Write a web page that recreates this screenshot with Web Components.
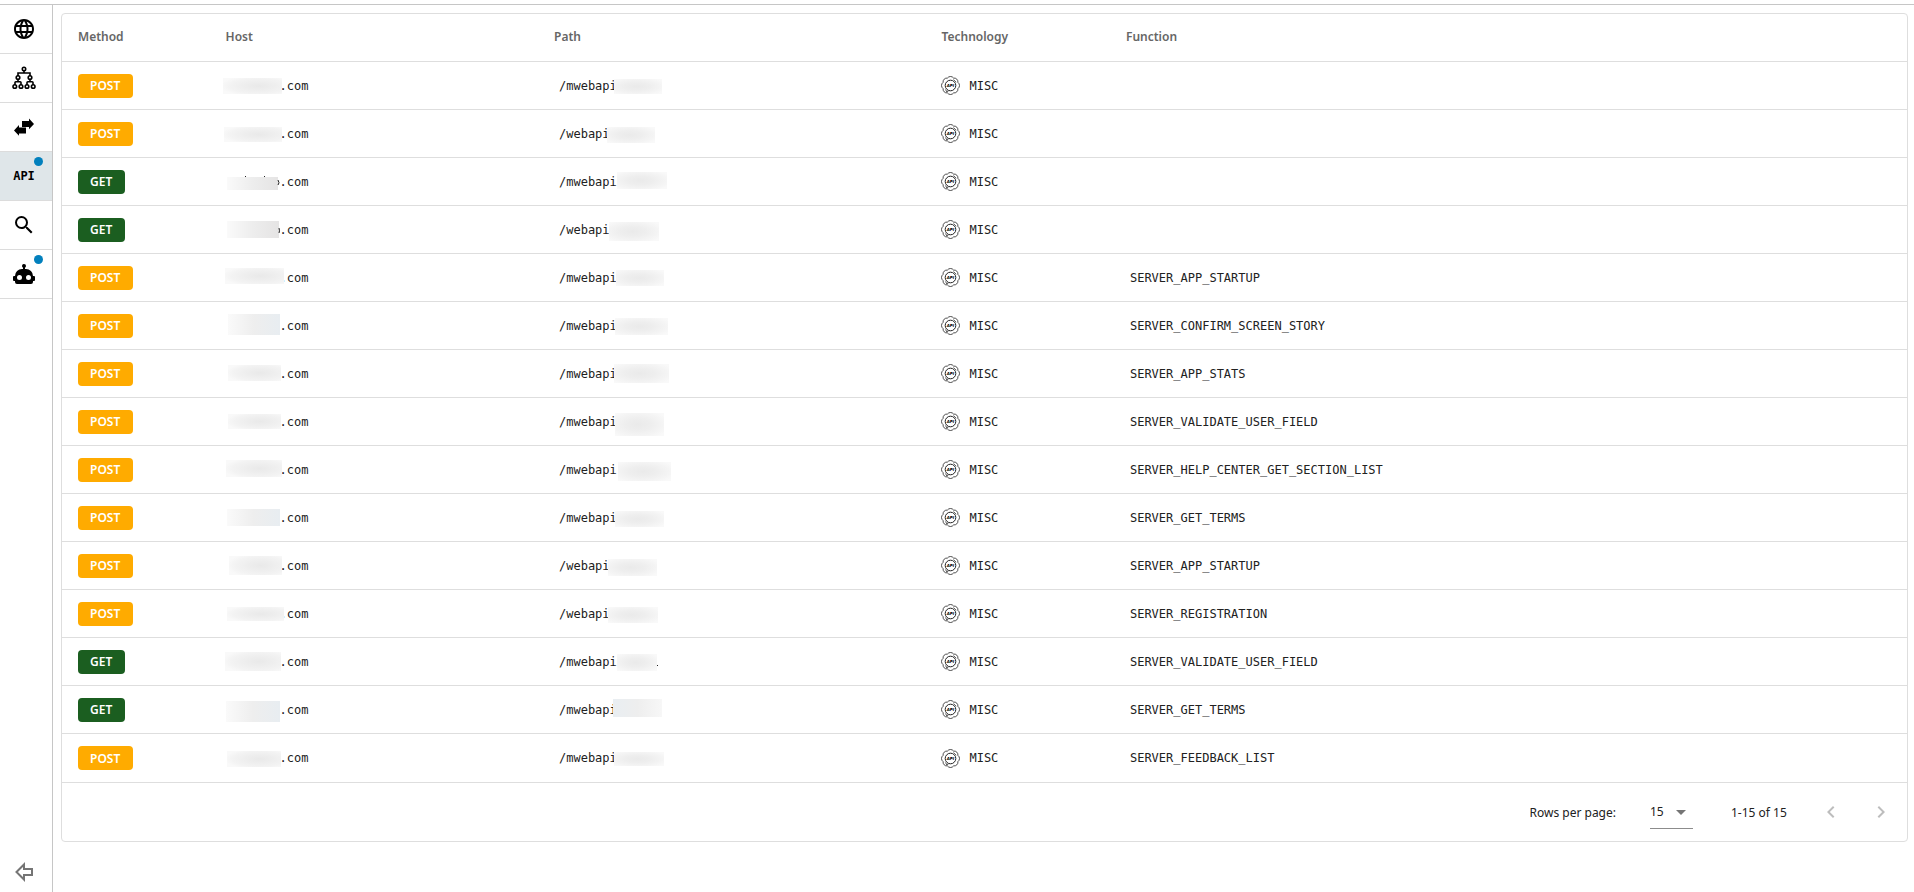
<!DOCTYPE html>
<html lang="en">
<head>
<meta charset="utf-8">
<title>API endpoints</title>
<style>
  html, body { margin: 0; height: 100%; background: #fff; }
  body { font-family: "Noto Sans", sans-serif; font-size: 12px; color: #212121; }
</style>
</head>
<body>
<app-shell>
  <side-nav slot="nav"></side-nav>
  <data-card>
    <endpoint-table></endpoint-table>
    <table-pager slot="footer"></table-pager>
  </data-card>
</app-shell>

<script>
const define = (name, html, setup) => {
  const template = document.createElement('template');
  template.innerHTML = html;
  customElements.define(name, class extends HTMLElement {
    constructor() {
      super();
      this.attachShadow({ mode: 'open' }).append(template.content.cloneNode(true));
    }
    connectedCallback() { if (setup) setup.call(this, this.shadowRoot); }
  });
};

/* Page frame: navigation rail on the left, content on the right */
define('app-shell', `
  <style>
    :host { display: flex; box-sizing: border-box; min-height: 100%; padding-top: 4px; }
    .frame { display: flex; flex: 1; border-top: 1px solid #c6c6c6; }
    main { flex: 1; min-width: 0; padding: 8px 6px 8px 8px; }
  </style>
  <div class="frame"><slot name="nav"></slot><main><slot></slot></main></div>
`);

define('nav-item', `
  <style>
    :host { display: block; border-bottom: 1px solid #dcdcdc; }
    :host([active]) { background: #dfe6e9; }
    :host([plain]) { border: 0; }
    button { position: relative; display: flex; align-items: center; width: 100%; height: 48px;
      padding: 0 12px; border: 0; background: none; color: #000; cursor: pointer; font: inherit; }
    :host([plain]) button { height: 40px; color: #757575; }
    .dot { display: none; position: absolute; top: 5px; right: 9px; width: 9px; height: 9px;
      border-radius: 50%; background: #0280bd; }
    :host([badge]) .dot { display: block; }
  </style>
  <button type="button"><slot></slot><span class="dot"></span></button>
`, function (root) {
  root.querySelector('button').setAttribute('aria-label', this.getAttribute('label'));
});

define('side-nav', `
  <style>
    :host { display: flex; flex-direction: column; justify-content: space-between; width: 52px;
      border-right: 1px solid #c6c6c6; }
    svg { display: block; width: 24px; height: 24px; fill: currentColor; }
    .line { fill: none; stroke: currentColor; stroke-width: 2; }
    .api { width: 24px; text-align: center; font: bold 12px/24px "DejaVu Sans Mono", monospace; }
  </style>
  <nav>
    <nav-item label="Web"><svg viewBox="0 0 24 24"><path d="M11.99 2C6.47 2 2 6.48 2 12s4.47 10 9.99 10C17.52 22 22 17.52 22 12S17.52 2 11.99 2zm6.93 6h-2.95a15.65 15.65 0 0 0-1.38-3.56A8.03 8.03 0 0 1 18.92 8zM12 4.04c.83 1.2 1.48 2.53 1.91 3.96h-3.82c.43-1.43 1.08-2.76 1.91-3.96zM4.26 14C4.1 13.36 4 12.69 4 12s.1-1.36.26-2h3.38c-.08.66-.14 1.32-.14 2s.06 1.34.14 2H4.26zm.82 2h2.95c.32 1.25.78 2.45 1.38 3.56A7.99 7.99 0 0 1 5.08 16zm2.95-8H5.08a7.99 7.99 0 0 1 4.33-3.56A15.65 15.65 0 0 0 8.03 8zM12 19.96c-.83-1.2-1.48-2.53-1.91-3.96h3.82c-.43 1.43-1.08 2.76-1.91 3.96zM14.34 14H9.66c-.09-.66-.16-1.32-.16-2s.07-1.35.16-2h4.68c.09.65.16 1.32.16 2s-.07 1.34-.16 2zm.25 5.56c.6-1.11 1.06-2.31 1.38-3.56h2.95a8.03 8.03 0 0 1-4.33 3.56zM16.36 14c.08-.66.14-1.32.14-2s-.06-1.34-.14-2h3.38c.16.64.26 1.31.26 2s-.1 1.36-.26 2h-3.38z"/></svg></nav-item>
    <nav-item label="Site map"><svg viewBox="0 0 24 24"><g class="line" style="stroke-width:1.6"><circle cx="12" cy="3" r="1.7"/><circle cx="6" cy="11.5" r="1.8"/><circle cx="18" cy="11.5" r="1.8"/><circle cx="2.8" cy="20.5" r="1.8"/><circle cx="9" cy="20.5" r="1.8"/><circle cx="15" cy="20.5" r="1.8"/><circle cx="21.2" cy="20.5" r="1.8"/><path d="M12 5v2M6 10V7h12v3M6 13.300v2.200M3 18.700v-2.200q0-.8.8-.8h4.400q.8 0 .8.8v2.200M18 13.300v2.200M15 18.700v-2.200q0-.8.8-.8h4.400q.8 0 .8.8v2.200"/></g></svg></nav-item>
    <nav-item label="Requests"><svg viewBox="0 0 24 24"><path d="M10 6h7V3.500L22 9l-5 5.200V12h-7zM14 12.500H7V10L2 15.500l5 5.200V18.500h7z"/></svg></nav-item>
    <nav-item label="API" active badge><span class="api">API</span></nav-item>
    <nav-item label="Search"><svg viewBox="0 0 24 24"><path d="M15.500 14h-.79l-.28-.27A6.471 6.471 0 0 0 16 9.500 6.500 6.500 0 1 0 9.500 16c1.610 0 3.090-.59 4.230-1.570l.27.28v.79l5 4.990L20.490 19l-4.990-5zm-6 0C7.010 14 5 11.990 5 9.500S7.010 5 9.500 5 14 7.010 14 9.500 11.990 14 9.500 14z"/></svg></nav-item>
    <nav-item label="Bots" badge><svg viewBox="0 0 24 24"><path d="M12 2a2 2 0 0 1 2 2c0 .74-.4 1.390-1 1.730V7h1a7 7 0 0 1 7 7h1a1 1 0 0 1 1 1v3a1 1 0 0 1-1 1h-1v1a2 2 0 0 1-2 2H5a2 2 0 0 1-2-2v-1H2a1 1 0 0 1-1-1v-3a1 1 0 0 1 1-1h1a7 7 0 0 1 7-7h1V5.730A2 2 0 0 1 12 2M7.500 13a2.500 2.500 0 1 0 0 5 2.500 2.500 0 0 0 0-5m9 0a2.500 2.500 0 1 0 0 5 2.500 2.500 0 0 0 0-5z"/></svg></nav-item>
  </nav>
  <nav-item label="Collapse" plain><svg viewBox="0 0 24 24"><path class="line" d="M4.500 12L12 4.500V9h8v6h-8v4.500z"/></svg></nav-item>
`);

define('data-card', `
  <style>
    :host { display: block; border: 1px solid #dedede; border-radius: 4px; overflow: hidden; }
  </style>
  <slot></slot><slot name="footer"></slot>
`);

define('method-badge', `
  <style>
    :host { display: inline-flex; align-items: center; height: 24px; padding: 0 13px 0 12px; border-radius: 4px;
      background: #ffab00; color: #fff; font-weight: 600; font-size: 12px; }
    :host([method="GET"]) { background: #1b5e20; }
  </style>
  <slot></slot>
`);

define('tech-label', `
  <style>
    :host { display: flex; align-items: center; gap: 9px; }
    svg { display: block; width: 19px; height: 19px; }
    path, circle { fill: none; stroke: #222; }
  </style>
  <svg viewBox="0 0 19 19" aria-hidden="true">
    <path stroke-width=".8" d="M16.900 12.600A3.800 3.800 0 0 1 12.600 16.900A3.800 3.800 0 0 1 6.400 16.900A3.800 3.800 0 0 1 2.100 12.600A3.800 3.800 0 0 1 2.100 6.400A3.800 3.800 0 0 1 6.400 2.100A3.800 3.800 0 0 1 12.600 2.100A3.800 3.800 0 0 1 16.900 6.400A3.800 3.800 0 0 1 16.900 12.600z"/>
    <circle cx="9.500" cy="9.500" r="5.300" stroke-width="1"/>
    <path stroke-width=".7" d="M12.500 3.500l2.700 2.700M4 13.500l2.500 2.300M5 15.800l2.500-.8"/>
    <text x="9.500" y="11" text-anchor="middle" font-family="DejaVu Sans" font-size="4" font-weight="700" font-style="italic">API</text>
  </svg>
  <slot></slot>
`);

/* Text with a masked section: the mask is laid in the same grid cell as the text */
define('masked-text', `
  <style>
    :host { display: grid; align-items: center; height: 47px; }
    span, svg { grid-area: 1 / 1; }
    span { padding-left: 5px; }
    :host([kind="host"]) span { padding-left: 54px; }
    svg { width: 130px; height: 47px; overflow: visible; }
  </style>
  <span><slot></slot></span>
  <svg viewBox="0 0 130 47" aria-hidden="true">
    <defs>
      <radialGradient id="host" cx=".6" cy=".5" r=".65"><stop offset="0" stop-color="#e9e9e9"/><stop offset=".4" stop-color="#eee"/><stop offset=".75" stop-color="#f3f3f3"/><stop offset="1" stop-color="#f9f9f9"/></radialGradient>
      <radialGradient id="path" cx=".47" cy=".5" r=".65"><stop offset="0" stop-color="#eaeaea"/><stop offset=".4" stop-color="#eee"/><stop offset=".75" stop-color="#f4f4f4"/><stop offset="1" stop-color="#f9f9f9"/></radialGradient>
      <linearGradient id="dark"><stop offset="0" stop-color="#fafafa"/><stop offset=".5" stop-color="#ededed"/><stop offset="1" stop-color="#e5e4e4"/></linearGradient>
      <linearGradient id="blue"><stop offset="0" stop-color="#fafafa"/><stop offset=".5" stop-color="#eee"/><stop offset="1" stop-color="#e8edf1"/></linearGradient>
      <linearGradient id="blueleft"><stop offset="0" stop-color="#e9eef2"/><stop offset=".5" stop-color="#eee"/><stop offset="1" stop-color="#f7f7f7"/></linearGradient>
    </defs>
    <rect/><path fill="none" stroke="#222"/>
  </svg>
`, function (root) {
  const [x, y, w, h, tone] = this.getAttribute('mask').split(' ');
  const rect = root.querySelector('rect');
  Object.entries({ x, y, width: w, height: h, fill: `url(#${tone || this.getAttribute('kind')})` })
    .forEach(([k, v]) => rect.setAttribute(k, v));
  root.querySelector('path').setAttribute('d', this.getAttribute('trace') || '');
});

/* method, host mask, path, path mask, function, host trace, path trace */
const ROWS = [
  ['POST', '-3 16 59 16', '/mwebapi', '60 17 48 15', ''],
  ['POST', '-2 17 58 15', '/webapi', '53 17 48 16', ''],
  ['GET', '1 19 51 13 dark', '/mwebapi', '63 14 50 17', '', 'M19.500 18v1M38.500 18v1M52 22q2 3 0 5'],
  ['GET', '1 15 52 17 dark', '/webapi', '55 16 50 19', '', 'M53 22q1 3 0 5'],
  ['POST', '-1 14 59 16', '/mwebapi', '62 16 48 16', 'SERVER_APP_STARTUP'],
  ['POST', '2 12 52 21 blue', '/mwebapi', '61 16 53 17', 'SERVER_CONFIRM_SCREEN_STORY'],
  ['POST', '2 15 53 16', '/mwebapi', '60 14 55 19', 'SERVER_APP_STATS'],
  ['POST', '2 16 53 15', '/mwebapi', '61 15 49 23', 'SERVER_VALIDATE_USER_FIELD'],
  ['POST', '0 14 56 17', '/mwebapi', '64 16 53 19', 'SERVER_HELP_CENTER_GET_SECTION_LIST'],
  ['POST', '1 15 53 17 blue', '/mwebapi', '61 17 49 16', 'SERVER_GET_TERMS'],
  ['POST', '3 14 53 19', '/webapi', '54 17 49 17', 'SERVER_APP_STARTUP'],
  ['POST', '1 17 57 14', '/webapi', '54 17 50 16', 'SERVER_REGISTRATION'],
  ['GET', '-1 14 56 19', '/mwebapi', '63 16 40 17', 'SERVER_VALIDATE_USER_FIELD', '', 'M103.500 27v1'],
  ['GET', '0 15 54 21 blue', '/mwebapi', '59 13 49 18 blueleft', 'SERVER_GET_TERMS'],
  ['POST', '1 16 54 16', '/mwebapi', '60 17 50 14', 'SERVER_FEEDBACK_LIST'],
];

define('endpoint-table', `
  <style>
    :host { display: block; }
    table { width: 100%; table-layout: fixed; border-collapse: separate; border-spacing: 0; }
    th, td { box-sizing: border-box; height: 48px; padding: 0 16px; border-bottom: 1px solid #dedede;
      text-align: left; vertical-align: middle; white-space: nowrap; }
    th { padding-bottom: 2px; color: #666; font: 600 12px "Noto Sans", sans-serif; }
    td { font-family: "DejaVu Sans Mono", monospace; font-size: 12px; }
    tr:last-child td { height: 49px; }
    thead tr:last-child th { height: 48px; }
    method-badge { font-family: "Noto Sans", sans-serif; vertical-align: middle; }
    .fn { padding-left: 20px; }
    .c1 { width: 8%; } .c2 { width: 17.8%; } .c3 { width: 21%; } .c4 { width: 10%; }
  </style>
  <table>
    <colgroup><col class="c1"><col class="c2"><col class="c3"><col class="c4"><col></colgroup>
    <thead><tr><th>Method</th><th>Host</th><th>Path</th><th>Technology</th><th>Function</th></tr></thead>
    <tbody></tbody>
  </table>
`, function (root) {
  root.querySelector('tbody').innerHTML = ROWS.map(([method, hm, path, pm, fn, ht = '', pt = '']) => `<tr>
    <td><method-badge method="${method}">${method}</method-badge></td>
    <td><masked-text kind="host" mask="${hm}" trace="${ht}">.com</masked-text></td>
    <td><masked-text kind="path" mask="${pm}" trace="${pt}">${path}</masked-text></td>
    <td><tech-label>MISC</tech-label></td>
    <td class="fn">${fn}</td></tr>`).join('');
});

define('table-pager', `
  <style>
    :host { display: flex; align-items: center; justify-content: flex-end; height: 58px; padding-right: 14px; }
    label { margin-right: 34px; }
    .pick { display: grid; width: 43px; margin-right: 38px; border-bottom: 1px solid #8c8c8c; }
    .pick > * { grid-area: 1 / 1; }
    select { appearance: none; height: 32px; padding: 0; border: 0; border-radius: 0; background: none;
      color: inherit; font: inherit; }
    svg { display: block; width: 24px; height: 24px; }
    .pick svg { justify-self: end; align-self: center; fill: #757575; pointer-events: none; }
    .range { width: 88px; }
    button { padding: 0; border: 0; background: none; color: #bdbdbd; }
    button svg { fill: currentColor; }
    button + button { margin-left: 26px; }
  </style>
  <label for="size">Rows per page:</label>
  <div class="pick">
    <select id="size"><option>15</option><option>30</option><option>50</option></select>
    <svg viewBox="0 0 24 24"><path d="M7 10l5 5 5-5z"/></svg>
  </div>
  <span class="range">1-15 of 15</span>
  <button type="button" disabled aria-label="Previous page"><svg viewBox="0 0 24 24"><path d="M15.410 7.410L14 6l-6 6 6 6 1.410-1.410L10.830 12z"/></svg></button>
  <button type="button" disabled aria-label="Next page"><svg viewBox="0 0 24 24"><path d="M10 6L8.590 7.410 13.170 12l-4.580 4.590L10 18l6-6z"/></svg></button>
`);
</script>
</body>
</html>
